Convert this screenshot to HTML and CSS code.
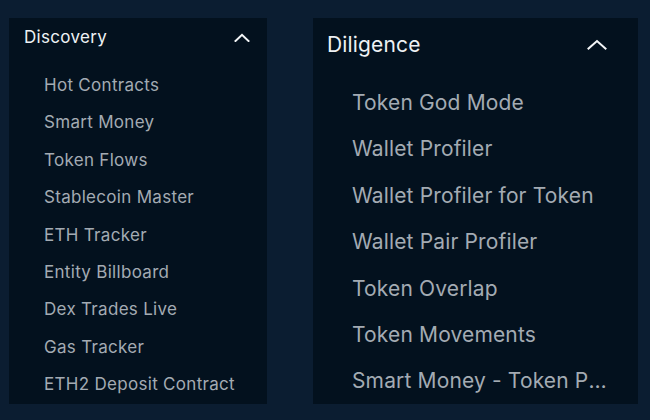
FILE: index.html
```html
<!DOCTYPE html>
<html lang="en">
<head>
  <meta charset="UTF-8" />
  <meta name="viewport" content="width=device-width, initial-scale=1" />
  <title>Dashboards Menu</title>
  <link rel="stylesheet" href="styles.css">
</head>
<body>
  <div class="menus">
    <!-- Discovery group -->
    <section class="group group-sm">
      <div class="group-head">
        <span class="group-title">Discovery</span>
        <svg class="chevron" viewBox="0 0 16 9" width="16" height="9"><path d="M1.5 8 L8 1.8 L14.5 8" /></svg>
      </div>
      <ul class="group-list">
        <li>Hot Contracts</li>
        <li>Smart Money</li>
        <li>Token Flows</li>
        <li>Stablecoin Master</li>
        <li>ETH Tracker</li>
        <li>Entity Billboard</li>
        <li>Dex Trades Live</li>
        <li>Gas Tracker</li>
        <li>ETH2 Deposit Contract</li>
      </ul>
    </section>

    <!-- Diligence group -->
    <section class="group group-lg">
      <div class="group-head">
        <span class="group-title">Diligence</span>
        <svg class="chevron" viewBox="0 0 20 11" width="20" height="11"><path d="M1.5 9.5 L10 2 L18.5 9.5" /></svg>
      </div>
      <ul class="group-list">
        <li>Token God Mode</li>
        <li>Wallet Profiler</li>
        <li>Wallet Profiler for Token</li>
        <li>Wallet Pair Profiler</li>
        <li>Token Overlap</li>
        <li>Token Movements</li>
        <li>Smart Money - Token Paths</li>
      </ul>
    </section>
  </div>
</body>
</html>
```

FILE: styles.css
```css
body {
  margin: 0;
  background-color: #0b1d31;
  font-family: Inter, 'Noto Sans', sans-serif;
  color: #e9edf1;
}
.menus {
  display: flex;
  gap: 46px;
  padding: 18px 0 0 9px;
}
.group {
  background-color: #03111e;
  height: 386px;
  box-sizing: border-box;
  overflow: hidden;
}
.group-head {
  display: flex;
  align-items: center;
  justify-content: space-between;
}
.group-title {
  color: #eef1f4;
}
.chevron path {
  fill: none;
  stroke: #f3f5f7;
  stroke-width: 2;
  stroke-linecap: square;
}
.group-list {
  list-style: none;
  margin: 0;
  padding: 0;
}
.group-list li {
  color: #a3abb3;
  white-space: nowrap;
  overflow: hidden;
  text-overflow: ellipsis;
}

/* small (Discovery) */
.group-sm {
  width: 258px;
  font-size: 17px;
  letter-spacing: 0.3px;
}
.group-sm .group-head {
  height: 38px;
  padding: 0 17px 0 15px;
  margin-bottom: 11px;
}
.group-sm .group-list li {
  height: 37.4px;
  line-height: 37.4px;
  padding-left: 35px;
}

/* large (Diligence) */
.group-lg {
  width: 325px;
  font-size: 21px;
  letter-spacing: 0.15px;
}
.group-lg .group-head {
  height: 52px;
  padding: 0 31px 0 14px;
  margin-bottom: 10px;
}
.group-lg .group-list li {
  height: 46.4px;
  line-height: 46.4px;
  padding-left: 39px;
  padding-right: 28px;
}
```
